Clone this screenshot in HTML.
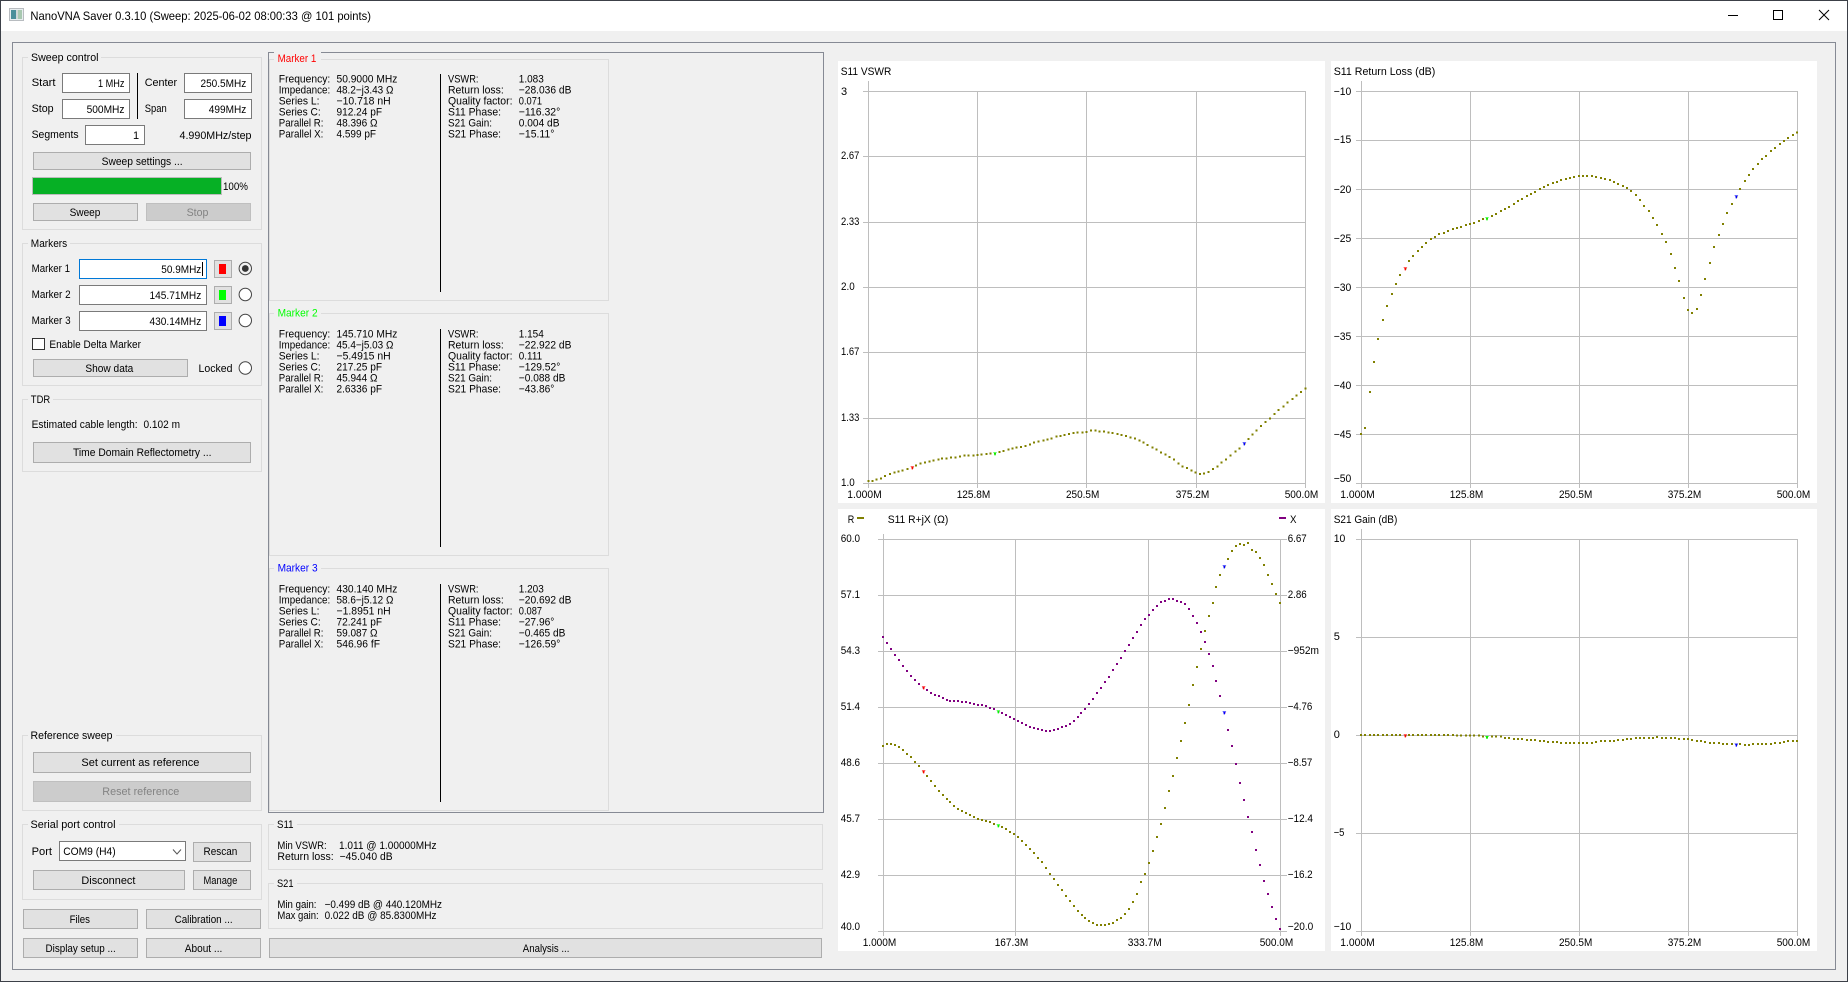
<!DOCTYPE html>
<html><head><meta charset="utf-8"><title>NanoVNA Saver</title>
<style>
html,body{margin:0;padding:0;background:#f0f0f0;overflow:hidden}
svg{display:block}
text{font:11px "Liberation Sans","Noto Sans CJK JP",sans-serif;fill:#000;white-space:pre}
rect,line.c,path.c{shape-rendering:crispEdges}
.g{fill:#f0f0f0;stroke:#dcdcdc}
.f{fill:none;stroke:#868a94}
.b{fill:#e1e1e1;stroke:#adadad}
.d{fill:#ccc;stroke:#bfbfbf}
.i{fill:#fff;stroke:#7a7a7a}
.gr{fill:none;stroke:#bebebe;stroke-width:1;shape-rendering:crispEdges}
.dot{fill:none;stroke-width:6;stroke-linecap:square;shape-rendering:crispEdges}
.dis{fill:#838383}
</style></head><body>
<svg xmlns="http://www.w3.org/2000/svg" width="1848" height="982" viewBox="0 0 1848 982">
<rect width="1848" height="982" fill="#f0f0f0"/>
<rect width="1848" height="31" fill="#fff"/>
<rect width="1848" height="1" fill="#3c4048"/><rect y="981" width="1848" height="1" fill="#3c4048"/><rect width="1" height="982" fill="#3c4048"/><rect x="1847" width="1" height="982" fill="#3c4048"/>
<!-- title bar -->
<rect x="9.5" y="8.5" width="14" height="12" fill="#e8eef0" stroke="#b8bcc0"/><rect x="11" y="10" width="5" height="9" fill="#4a8f9a"/><rect x="16" y="10" width="2" height="9" fill="#d0d8d8"/><rect x="18" y="10" width="4" height="9" fill="#a8c8b0"/>
<text x="30.4" y="20" textLength="340.6" lengthAdjust="spacingAndGlyphs" style="font-size:12px">NanoVNA Saver 0.3.10 (Sweep: 2025-06-02 08:00:33 @ 101 points)</text>
<rect x="1728" y="15" width="10" height="1" fill="#000"/>
<rect x="1773.5" y="10.5" width="9" height="9" fill="none" stroke="#000"/>
<path d="M1819 10L1829 20M1829 10L1819 20" stroke="#000" stroke-width="1" fill="none"/>
<!-- frames -->
<rect class="f" x="12.5" y="42.5" width="1823" height="927"/>
<rect class="f" x="268.5" y="52.5" width="555" height="760"/>

<!-- Sweep control -->
<rect class="g" x="22.5" y="57.5" width="239" height="172"/>
<rect x="28" y="50" width="73" height="12" fill="#f0f0f0"/>
<text x="31" y="61" textLength="67.5" lengthAdjust="spacingAndGlyphs">Sweep control</text>
<text x="31.6" y="86" textLength="24" lengthAdjust="spacingAndGlyphs">Start</text>
<rect class="i" x="62.5" y="73.5" width="67" height="19"/>
<text x="98" y="87" textLength="26.5" lengthAdjust="spacingAndGlyphs">1 MHz</text>
<text x="31.6" y="112" textLength="22" lengthAdjust="spacingAndGlyphs">Stop</text>
<rect class="i" x="62.5" y="99.5" width="67" height="19"/>
<text x="86.6" y="113" textLength="37.9" lengthAdjust="spacingAndGlyphs">500MHz</text>
<rect x="137" y="73" width="1" height="46" fill="#000"/>
<text x="144.7" y="86" textLength="32.4" lengthAdjust="spacingAndGlyphs">Center</text>
<rect class="i" x="184.5" y="73.5" width="67" height="19"/>
<text x="200.5" y="87" textLength="45.8" lengthAdjust="spacingAndGlyphs">250.5MHz</text>
<text x="144.7" y="112" textLength="22" lengthAdjust="spacingAndGlyphs">Span</text>
<rect class="i" x="184.5" y="99.5" width="67" height="19"/>
<text x="208.8" y="113" textLength="37.5" lengthAdjust="spacingAndGlyphs">499MHz</text>
<text x="31.6" y="138" textLength="47" lengthAdjust="spacingAndGlyphs">Segments</text>
<rect class="i" x="85.5" y="125.5" width="59" height="19"/>
<text x="133" y="139">1</text>
<text x="179.5" y="139" textLength="72" lengthAdjust="spacingAndGlyphs">4.990MHz/step</text>
<rect class="b" x="33.5" y="152.5" width="217" height="17"/>
<text x="101.6" y="165" textLength="81" lengthAdjust="spacingAndGlyphs">Sweep settings ...</text>
<rect x="32.5" y="177.5" width="189" height="17" fill="#06b025" stroke="#bcbcbc"/>
<text x="223" y="190" textLength="25" lengthAdjust="spacingAndGlyphs">100%</text>
<rect class="b" x="33.5" y="203.5" width="104" height="17"/>
<text x="69.6" y="216" textLength="30.8" lengthAdjust="spacingAndGlyphs">Sweep</text>
<rect class="d" x="146.5" y="203.5" width="104" height="17"/>
<text class="dis" x="186.6" y="216" textLength="21.8" lengthAdjust="spacingAndGlyphs">Stop</text>

<!-- Markers -->
<rect class="g" x="22.5" y="243.5" width="239" height="142"/>
<rect x="28" y="237" width="42" height="12" fill="#f0f0f0"/>
<text x="30.8" y="247" textLength="36.4" lengthAdjust="spacingAndGlyphs">Markers</text>
<text x="31.6" y="272" textLength="38.4" lengthAdjust="spacingAndGlyphs">Marker 1</text>
<rect x="79.5" y="259.5" width="127" height="19" fill="#fff" stroke="#0078d7"/>
<text x="161.3" y="273" textLength="40" lengthAdjust="spacingAndGlyphs">50.9MHz</text>
<rect x="202" y="262" width="1" height="14" fill="#000"/>
<rect class="b" x="214.5" y="260.5" width="17" height="17"/><rect x="219" y="264" width="7" height="10" fill="#f00"/>
<circle cx="245.3" cy="268.5" r="6.2" fill="#f0f0f0" stroke="#444"/><circle cx="245.3" cy="268.5" r="3.4" fill="#333"/>
<text x="31.6" y="298" textLength="39" lengthAdjust="spacingAndGlyphs">Marker 2</text>
<rect class="i" x="79.5" y="285.5" width="127" height="19"/>
<text x="149.5" y="299" textLength="51.8" lengthAdjust="spacingAndGlyphs">145.71MHz</text>
<rect class="b" x="214.5" y="286.5" width="17" height="17"/><rect x="219" y="290" width="7" height="10" fill="#0f0"/>
<circle cx="245.3" cy="294.5" r="6.2" fill="#fff" stroke="#444"/>
<text x="31.6" y="324" textLength="39" lengthAdjust="spacingAndGlyphs">Marker 3</text>
<rect class="i" x="79.5" y="311.5" width="127" height="19"/>
<text x="149.5" y="325" textLength="51.8" lengthAdjust="spacingAndGlyphs">430.14MHz</text>
<rect class="b" x="214.5" y="312.5" width="17" height="17"/><rect x="219" y="316" width="7" height="10" fill="#00f"/>
<circle cx="245.3" cy="320.5" r="6.2" fill="#fff" stroke="#444"/>
<rect x="32.5" y="338.5" width="12" height="11" fill="#fff" stroke="#333"/>
<text x="49.4" y="348" textLength="91.6" lengthAdjust="spacingAndGlyphs">Enable Delta Marker</text>
<rect class="b" x="33.5" y="359.5" width="154" height="17"/>
<text x="85.4" y="372" textLength="47.9" lengthAdjust="spacingAndGlyphs">Show data</text>
<text x="198.5" y="372" textLength="34" lengthAdjust="spacingAndGlyphs">Locked</text>
<circle cx="245.3" cy="368" r="6.2" fill="#fff" stroke="#444"/>

<!-- TDR -->
<rect class="g" x="22.5" y="399.5" width="239" height="72"/>
<rect x="28" y="393" width="25" height="12" fill="#f0f0f0"/>
<text x="30.8" y="403" textLength="19.4" lengthAdjust="spacingAndGlyphs">TDR</text>
<text x="31.6" y="428" textLength="106" lengthAdjust="spacingAndGlyphs">Estimated cable length:</text>
<text x="143.5" y="428" textLength="36.5" lengthAdjust="spacingAndGlyphs">0.102 m</text>
<rect class="b" x="33.5" y="442.5" width="217" height="20"/>
<text x="73" y="456" textLength="138.5" lengthAdjust="spacingAndGlyphs">Time Domain Reflectometry ...</text>

<!-- Reference sweep -->
<rect class="g" x="22.5" y="735.5" width="239" height="75"/>
<rect x="28" y="729" width="88" height="12" fill="#f0f0f0"/>
<text x="30.5" y="739" textLength="82" lengthAdjust="spacingAndGlyphs">Reference sweep</text>
<rect class="b" x="33.5" y="752.5" width="217" height="20"/>
<text x="81.4" y="766" textLength="118" lengthAdjust="spacingAndGlyphs">Set current as reference</text>
<rect class="d" x="33.5" y="781.5" width="217" height="20"/>
<text class="dis" x="102.3" y="795" textLength="77" lengthAdjust="spacingAndGlyphs">Reset reference</text>

<!-- Serial -->
<rect class="g" x="22.5" y="824.5" width="239" height="75"/>
<rect x="28" y="818" width="91" height="12" fill="#f0f0f0"/>
<text x="30.5" y="828" textLength="85" lengthAdjust="spacingAndGlyphs">Serial port control</text>
<text x="31.6" y="855" textLength="20.4" lengthAdjust="spacingAndGlyphs">Port</text>
<rect class="i" x="59.5" y="841.5" width="126" height="19"/>
<text x="63.2" y="855" textLength="52.5" lengthAdjust="spacingAndGlyphs">COM9 (H4)</text>
<path d="M173 849.5l4 4.5l4-4.5" fill="none" stroke="#555"/>
<rect class="b" x="193.5" y="842.5" width="57" height="19"/>
<text x="203.5" y="855" textLength="33.8" lengthAdjust="spacingAndGlyphs">Rescan</text>
<rect class="b" x="33.5" y="870.5" width="151" height="19"/>
<text x="81.4" y="884" textLength="54" lengthAdjust="spacingAndGlyphs">Disconnect</text>
<rect class="b" x="193.5" y="870.5" width="57" height="19"/>
<text x="203.5" y="884" textLength="33.8" lengthAdjust="spacingAndGlyphs">Manage</text>

<rect class="b" x="23.5" y="909.5" width="114" height="19"/>
<text x="69.6" y="923" textLength="20.4" lengthAdjust="spacingAndGlyphs">Files</text>
<rect class="b" x="146.5" y="909.5" width="114" height="19"/>
<text x="174.6" y="923" textLength="58" lengthAdjust="spacingAndGlyphs">Calibration ...</text>
<rect class="b" x="23.5" y="938.5" width="114" height="19"/>
<text x="45.5" y="952" textLength="70.2" lengthAdjust="spacingAndGlyphs">Display setup ...</text>
<rect class="b" x="146.5" y="938.5" width="114" height="19"/>
<text x="184.8" y="952" textLength="37.5" lengthAdjust="spacingAndGlyphs">About ...</text>
<rect class="b" x="269.5" y="938.5" width="552" height="19"/>
<text x="522.8" y="952" textLength="46.6" lengthAdjust="spacingAndGlyphs">Analysis ...</text>

<!-- S11 / S21 boxes -->
<rect class="g" x="268.5" y="824.5" width="554" height="45"/>
<rect x="274" y="818" width="23" height="12" fill="#f0f0f0"/>
<text x="277" y="828" textLength="16.5" lengthAdjust="spacingAndGlyphs">S11</text>
<text x="277.4" y="849" textLength="49.3" lengthAdjust="spacingAndGlyphs">Min VSWR:</text>
<text x="339" y="849" textLength="97.5" lengthAdjust="spacingAndGlyphs">1.011 @ 1.00000MHz</text>
<text x="277.4" y="860" textLength="56.3" lengthAdjust="spacingAndGlyphs">Return loss:</text>
<text x="339.6" y="860" textLength="53" lengthAdjust="spacingAndGlyphs">−45.040 dB</text>
<rect class="g" x="268.5" y="883.5" width="554" height="45"/>
<rect x="274" y="877" width="23" height="12" fill="#f0f0f0"/>
<text x="277" y="887" textLength="16.5" lengthAdjust="spacingAndGlyphs">S21</text>
<text x="277.4" y="908" textLength="39.1" lengthAdjust="spacingAndGlyphs">Min gain:</text>
<text x="324.6" y="908" textLength="117.4" lengthAdjust="spacingAndGlyphs">−0.499 dB @ 440.120MHz</text>
<text x="277.4" y="919" textLength="41.3" lengthAdjust="spacingAndGlyphs">Max gain:</text>
<text x="324.6" y="919" textLength="111.9" lengthAdjust="spacingAndGlyphs">0.022 dB @ 85.8300MHz</text>

<!-- Marker 1 box -->
<rect class="g" x="269.5" y="59.5" width="339" height="241"/>
<rect x="274" y="52" width="47" height="12" fill="#f0f0f0"/>
<text x="277.6" y="62" textLength="38.7" lengthAdjust="spacingAndGlyphs" style="fill:#f00">Marker 1</text>
<rect x="440" y="74" width="1" height="218" fill="#000"/>
<text x="278.8" y="82.7" textLength="51.4" lengthAdjust="spacingAndGlyphs">Frequency:</text>
<text x="278.8" y="93.7" textLength="51.4" lengthAdjust="spacingAndGlyphs">Impedance:</text>
<text x="278.8" y="104.7" textLength="40.7" lengthAdjust="spacingAndGlyphs">Series L:</text>
<text x="278.8" y="115.7" textLength="41.9" lengthAdjust="spacingAndGlyphs">Series C:</text>
<text x="278.8" y="126.7" textLength="44.6" lengthAdjust="spacingAndGlyphs">Parallel R:</text>
<text x="278.8" y="137.7" textLength="44.6" lengthAdjust="spacingAndGlyphs">Parallel X:</text>
<text x="336.5" y="82.7" textLength="60.9" lengthAdjust="spacingAndGlyphs">50.9000 MHz</text>
<text x="336.5" y="93.7" textLength="56.9" lengthAdjust="spacingAndGlyphs">48.2−j3.43 Ω</text>
<text x="336.5" y="104.7" textLength="54.2" lengthAdjust="spacingAndGlyphs">−10.718 nH</text>
<text x="336.5" y="115.7" textLength="45.5" lengthAdjust="spacingAndGlyphs">912.24 pF</text>
<text x="336.5" y="126.7" textLength="41" lengthAdjust="spacingAndGlyphs">48.396 Ω</text>
<text x="336.5" y="137.7" textLength="39.5" lengthAdjust="spacingAndGlyphs">4.599 pF</text>
<text x="448" y="82.7" textLength="30.5" lengthAdjust="spacingAndGlyphs">VSWR:</text>
<text x="448" y="93.7" textLength="55.8" lengthAdjust="spacingAndGlyphs">Return loss:</text>
<text x="448" y="104.7" textLength="64.5" lengthAdjust="spacingAndGlyphs">Quality factor:</text>
<text x="448" y="115.7" textLength="53" lengthAdjust="spacingAndGlyphs">S11 Phase:</text>
<text x="448" y="126.7" textLength="44" lengthAdjust="spacingAndGlyphs">S21 Gain:</text>
<text x="448" y="137.7" textLength="53" lengthAdjust="spacingAndGlyphs">S21 Phase:</text>
<text x="518.8" y="82.7" textLength="25" lengthAdjust="spacingAndGlyphs">1.083</text>
<text x="518.8" y="93.7" textLength="52.6" lengthAdjust="spacingAndGlyphs">−28.036 dB</text>
<text x="518.8" y="104.7" textLength="23.3" lengthAdjust="spacingAndGlyphs">0.071</text>
<text x="518.8" y="115.7" textLength="41.5" lengthAdjust="spacingAndGlyphs">−116.32°</text>
<text x="518.8" y="126.7" textLength="40.7" lengthAdjust="spacingAndGlyphs">0.004 dB</text>
<text x="518.8" y="137.7" textLength="35.6" lengthAdjust="spacingAndGlyphs">−15.11°</text>

<!-- Marker 2 box -->
<rect class="g" x="269.5" y="313.5" width="339" height="242"/>
<rect x="274" y="307" width="47" height="12" fill="#f0f0f0"/>
<text x="277.6" y="316.7" textLength="40" lengthAdjust="spacingAndGlyphs" style="fill:#0f0">Marker 2</text>
<rect x="440" y="329" width="1" height="218" fill="#000"/>
<text x="278.8" y="337.7" textLength="51.4" lengthAdjust="spacingAndGlyphs">Frequency:</text>
<text x="278.8" y="348.7" textLength="51.4" lengthAdjust="spacingAndGlyphs">Impedance:</text>
<text x="278.8" y="359.7" textLength="40.7" lengthAdjust="spacingAndGlyphs">Series L:</text>
<text x="278.8" y="370.7" textLength="41.9" lengthAdjust="spacingAndGlyphs">Series C:</text>
<text x="278.8" y="381.7" textLength="44.6" lengthAdjust="spacingAndGlyphs">Parallel R:</text>
<text x="278.8" y="392.7" textLength="44.6" lengthAdjust="spacingAndGlyphs">Parallel X:</text>
<text x="336.5" y="337.7" textLength="60.9" lengthAdjust="spacingAndGlyphs">145.710 MHz</text>
<text x="336.5" y="348.7" textLength="56.9" lengthAdjust="spacingAndGlyphs">45.4−j5.03 Ω</text>
<text x="336.5" y="359.7" textLength="54.2" lengthAdjust="spacingAndGlyphs">−5.4915 nH</text>
<text x="336.5" y="370.7" textLength="45.5" lengthAdjust="spacingAndGlyphs">217.25 pF</text>
<text x="336.5" y="381.7" textLength="41" lengthAdjust="spacingAndGlyphs">45.944 Ω</text>
<text x="336.5" y="392.7" textLength="45.5" lengthAdjust="spacingAndGlyphs">2.6336 pF</text>
<text x="448" y="337.7" textLength="30.5" lengthAdjust="spacingAndGlyphs">VSWR:</text>
<text x="448" y="348.7" textLength="55.8" lengthAdjust="spacingAndGlyphs">Return loss:</text>
<text x="448" y="359.7" textLength="64.5" lengthAdjust="spacingAndGlyphs">Quality factor:</text>
<text x="448" y="370.7" textLength="53" lengthAdjust="spacingAndGlyphs">S11 Phase:</text>
<text x="448" y="381.7" textLength="44" lengthAdjust="spacingAndGlyphs">S21 Gain:</text>
<text x="448" y="392.7" textLength="53" lengthAdjust="spacingAndGlyphs">S21 Phase:</text>
<text x="518.8" y="337.7" textLength="25" lengthAdjust="spacingAndGlyphs">1.154</text>
<text x="518.8" y="348.7" textLength="52.6" lengthAdjust="spacingAndGlyphs">−22.922 dB</text>
<text x="518.8" y="359.7" textLength="23.3" lengthAdjust="spacingAndGlyphs">0.111</text>
<text x="518.8" y="370.7" textLength="41.5" lengthAdjust="spacingAndGlyphs">−129.52°</text>
<text x="518.8" y="381.7" textLength="46.6" lengthAdjust="spacingAndGlyphs">−0.088 dB</text>
<text x="518.8" y="392.7" textLength="35.6" lengthAdjust="spacingAndGlyphs">−43.86°</text>

<!-- Marker 3 box -->
<rect class="g" x="269.5" y="568.5" width="339" height="242"/>
<rect x="274" y="562" width="47" height="12" fill="#f0f0f0"/>
<text x="277.6" y="571.7" textLength="40" lengthAdjust="spacingAndGlyphs" style="fill:#00f">Marker 3</text>
<rect x="440" y="584" width="1" height="218" fill="#000"/>
<text x="278.8" y="592.7" textLength="51.4" lengthAdjust="spacingAndGlyphs">Frequency:</text>
<text x="278.8" y="603.7" textLength="51.4" lengthAdjust="spacingAndGlyphs">Impedance:</text>
<text x="278.8" y="614.7" textLength="40.7" lengthAdjust="spacingAndGlyphs">Series L:</text>
<text x="278.8" y="625.7" textLength="41.9" lengthAdjust="spacingAndGlyphs">Series C:</text>
<text x="278.8" y="636.7" textLength="44.6" lengthAdjust="spacingAndGlyphs">Parallel R:</text>
<text x="278.8" y="647.7" textLength="44.6" lengthAdjust="spacingAndGlyphs">Parallel X:</text>
<text x="336.5" y="592.7" textLength="60.9" lengthAdjust="spacingAndGlyphs">430.140 MHz</text>
<text x="336.5" y="603.7" textLength="56.9" lengthAdjust="spacingAndGlyphs">58.6−j5.12 Ω</text>
<text x="336.5" y="614.7" textLength="54.2" lengthAdjust="spacingAndGlyphs">−1.8951 nH</text>
<text x="336.5" y="625.7" textLength="45.5" lengthAdjust="spacingAndGlyphs">72.241 pF</text>
<text x="336.5" y="636.7" textLength="41" lengthAdjust="spacingAndGlyphs">59.087 Ω</text>
<text x="336.5" y="647.7" textLength="43.5" lengthAdjust="spacingAndGlyphs">546.96 fF</text>
<text x="448" y="592.7" textLength="30.5" lengthAdjust="spacingAndGlyphs">VSWR:</text>
<text x="448" y="603.7" textLength="55.8" lengthAdjust="spacingAndGlyphs">Return loss:</text>
<text x="448" y="614.7" textLength="64.5" lengthAdjust="spacingAndGlyphs">Quality factor:</text>
<text x="448" y="625.7" textLength="53" lengthAdjust="spacingAndGlyphs">S11 Phase:</text>
<text x="448" y="636.7" textLength="44" lengthAdjust="spacingAndGlyphs">S21 Gain:</text>
<text x="448" y="647.7" textLength="53" lengthAdjust="spacingAndGlyphs">S21 Phase:</text>
<text x="518.8" y="592.7" textLength="25" lengthAdjust="spacingAndGlyphs">1.203</text>
<text x="518.8" y="603.7" textLength="52.6" lengthAdjust="spacingAndGlyphs">−20.692 dB</text>
<text x="518.8" y="614.7" textLength="23.3" lengthAdjust="spacingAndGlyphs">0.087</text>
<text x="518.8" y="625.7" textLength="35.6" lengthAdjust="spacingAndGlyphs">−27.96°</text>
<text x="518.8" y="636.7" textLength="46.6" lengthAdjust="spacingAndGlyphs">−0.465 dB</text>
<text x="518.8" y="647.7" textLength="41.5" lengthAdjust="spacingAndGlyphs">−126.59°</text>

<!-- Chart 1 VSWR -->
<rect x="838" y="61" width="487" height="442" fill="#fff"/>
<path class="gr" d="M868.5 81V488M977.5 91V488M1086.5 91V488M1196.5 91V488M1305.5 91V488M863 91.5H1306M863 156.5H1306M863 222.5H1306M863 287.5H1306M863 352.5H1306M863 418.5H1306M863 483.5H1306"/>
<text x="840.7" y="75" textLength="50.6" lengthAdjust="spacingAndGlyphs">S11 VSWR</text>
<text x="841" y="95">3</text>
<text x="841" y="159" textLength="18.3" lengthAdjust="spacingAndGlyphs">2.67</text>
<text x="841" y="225" textLength="18.3" lengthAdjust="spacingAndGlyphs">2.33</text>
<text x="841" y="290" textLength="13.7" lengthAdjust="spacingAndGlyphs">2.0</text>
<text x="841" y="355" textLength="18.3" lengthAdjust="spacingAndGlyphs">1.67</text>
<text x="841" y="421" textLength="18.3" lengthAdjust="spacingAndGlyphs">1.33</text>
<text x="841" y="486" textLength="13.7" lengthAdjust="spacingAndGlyphs">1.0</text>
<text x="847.3" y="498" textLength="34.4" lengthAdjust="spacingAndGlyphs">1.000M</text>
<text x="956.7" y="498" textLength="33.6" lengthAdjust="spacingAndGlyphs">125.8M</text>
<text x="1066" y="498" textLength="33.3" lengthAdjust="spacingAndGlyphs">250.5M</text>
<text x="1175.7" y="498" textLength="33.6" lengthAdjust="spacingAndGlyphs">375.2M</text>
<text x="1284.7" y="498" textLength="33.6" lengthAdjust="spacingAndGlyphs">500.0M</text>
<g transform="translate(830,50) scale(.33333)">
<path class="dot" stroke="#808000" d="M115 1293h0M127 1293h0M140 1288h0M153 1285h0M165 1278h0M180 1272h0M193 1268h0M205 1264h0M218 1261h0M232 1257h0M247 1252h0M258 1246h0M272 1240h0M285 1238h0M298 1235h0M311 1232h0M325 1229h0M336 1226h0M350 1225h0M363 1223h0M376 1222h0M390 1220h0M403 1217h0M415 1217h0M430 1216h0M442 1215h0M455 1213h0M469 1212h0M481 1211h0M495 1210h0M508 1206h0M520 1203h0M535 1199h0M548 1196h0M560 1193h0M573 1191h0M587 1188h0M600 1184h0M612 1178h0M625 1175h0M640 1172h0M652 1169h0M665 1165h0M679 1160h0M692 1158h0M704 1155h0M717 1152h0M730 1149h0M743 1148h0M757 1147h0M770 1146h0M783 1142h0M796 1142h0M808 1144h0M822 1145h0M836 1148h0M848 1149h0M862 1152h0M875 1155h0M888 1158h0M902 1162h0M915 1166h0M928 1171h0M940 1178h0M953 1185h0M967 1192h0M980 1199h0M993 1207h0M1006 1213h0M1018 1221h0M1032 1229h0M1045 1241h0M1058 1249h0M1071 1254h0M1084 1261h0M1097 1268h0M1110 1272h0M1122 1270h0M1135 1266h0M1149 1257h0M1162 1250h0M1175 1237h0M1188 1228h0M1202 1217h0M1216 1205h0M1229 1195h0M1243 1180h0M1255 1167h0M1268 1154h0M1280 1141h0M1293 1128h0M1307 1116h0M1320 1105h0M1333 1092h0M1346 1080h0M1360 1070h0M1373 1058h0M1387 1047h0M1400 1037h0M1413 1026h0M1427 1016h0"/>
<path fill="#f00" d="M241 1249h12l-4 4v5h-4v-5z"/><path fill="#0f0" d="M489 1207h12l-4 4v5h-4v-5z"/><path fill="#00f" d="M1237 1177h12l-4 4v5h-4v-5z"/>
</g>

<!-- Chart 2 Return loss -->
<rect x="1331" y="61" width="486" height="442" fill="#fff"/>
<path class="gr" d="M1361.5 81V488M1470.5 91V488M1579.5 91V488M1688.5 91V488M1797.5 91V488M1356 91.5H1798M1356 140.5H1798M1356 189.5H1798M1356 238.5H1798M1356 287.5H1798M1356 336.5H1798M1356 385.5H1798M1356 434.5H1798M1356 483.5H1798"/>
<text x="1333.7" y="75" textLength="101.6" lengthAdjust="spacingAndGlyphs">S11 Return Loss (dB)</text>
<text x="1333.7" y="95" textLength="17.6" lengthAdjust="spacingAndGlyphs">−10</text>
<text x="1333.7" y="143" textLength="17.6" lengthAdjust="spacingAndGlyphs">−15</text>
<text x="1333.7" y="193" textLength="17.6" lengthAdjust="spacingAndGlyphs">−20</text>
<text x="1333.7" y="242" textLength="17.6" lengthAdjust="spacingAndGlyphs">−25</text>
<text x="1333.7" y="291" textLength="17.6" lengthAdjust="spacingAndGlyphs">−30</text>
<text x="1333.7" y="340" textLength="17.6" lengthAdjust="spacingAndGlyphs">−35</text>
<text x="1333.7" y="389" textLength="17.6" lengthAdjust="spacingAndGlyphs">−40</text>
<text x="1333.7" y="438" textLength="17.6" lengthAdjust="spacingAndGlyphs">−45</text>
<text x="1333.7" y="482" textLength="17.6" lengthAdjust="spacingAndGlyphs">−50</text>
<text x="1340.3" y="498" textLength="34.4" lengthAdjust="spacingAndGlyphs">1.000M</text>
<text x="1449.7" y="498" textLength="33.6" lengthAdjust="spacingAndGlyphs">125.8M</text>
<text x="1559" y="498" textLength="33.3" lengthAdjust="spacingAndGlyphs">250.5M</text>
<text x="1667.7" y="498" textLength="33.6" lengthAdjust="spacingAndGlyphs">375.2M</text>
<text x="1776.7" y="498" textLength="33.6" lengthAdjust="spacingAndGlyphs">500.0M</text>
<g transform="translate(1330,50) scale(.33333)">
<path class="dot" stroke="#808000" d="M93 1152h0M105 1134h0M120 1026h0M132 936h0M144 867h0M159 810h0M171 768h0M186 732h0M198 702h0M210 675h0M226 655h0M237 633h0M249 618h0M264 603h0M276 591h0M288 579h0M303 567h0M315 561h0M327 552h0M342 549h0M354 543h0M369 537h0M381 534h0M393 531h0M408 525h0M420 522h0M432 519h0M447 513h0M459 507h0M471 505h0M486 498h0M498 492h0M513 483h0M525 477h0M537 471h0M552 462h0M564 453h0M576 447h0M591 438h0M603 432h0M615 426h0M630 417h0M642 411h0M654 405h0M669 399h0M681 396h0M693 390h0M708 387h0M720 384h0M732 381h0M747 378h0M759 378h0M771 378h0M786 378h0M798 381h0M813 384h0M825 387h0M840 390h0M852 396h0M864 402h0M879 408h0M891 414h0M903 423h0M918 435h0M930 450h0M942 468h0M957 483h0M969 504h0M981 525h0M996 552h0M1008 576h0M1023 612h0M1035 654h0M1047 693h0M1062 744h0M1074 780h0M1086 789h0M1101 777h0M1113 735h0M1125 687h0M1140 639h0M1152 591h0M1167 555h0M1179 522h0M1191 489h0M1206 462h0M1219 439h0M1230 417h0M1245 393h0M1257 375h0M1269 357h0M1284 342h0M1296 327h0M1308 318h0M1323 303h0M1335 294h0M1350 282h0M1362 273h0M1374 264h0M1389 255h0M1401 248h0"/>
<path fill="#f00" d="M220 652h12l-4 4v5h-4v-5z"/><path fill="#0f0" d="M465 502h12l-4 4v5h-4v-5z"/><path fill="#00f" d="M1213 436h12l-4 4v5h-4v-5z"/>
</g>

<!-- Chart 3 R+jX -->
<rect x="838" y="509" width="487" height="442" fill="#fff"/>
<path class="gr" d="M883.5 534V936M1015.5 539V936M1148.5 539V936M1280.5 539V936M878 539.5H1287M878 595.5H1287M878 651.5H1287M878 707.5H1287M878 763.5H1287M878 819.5H1287M878 875.5H1287M878 931.5H1287"/>
<text x="847.7" y="523" textLength="6.5" lengthAdjust="spacingAndGlyphs">R</text>
<rect x="857" y="517" width="7" height="2" fill="#808000"/>
<text x="887.7" y="523" textLength="60.6" lengthAdjust="spacingAndGlyphs">S11 R+jX (Ω)</text>
<rect x="1279" y="517" width="7" height="2" fill="#800080"/>
<text x="1290" y="523" textLength="6.5" lengthAdjust="spacingAndGlyphs">X</text>
<text x="840.7" y="542" textLength="19.3" lengthAdjust="spacingAndGlyphs">60.0</text>
<text x="840.7" y="598" textLength="19.3" lengthAdjust="spacingAndGlyphs">57.1</text>
<text x="840.7" y="654" textLength="19.3" lengthAdjust="spacingAndGlyphs">54.3</text>
<text x="840.7" y="710" textLength="19.3" lengthAdjust="spacingAndGlyphs">51.4</text>
<text x="840.7" y="766" textLength="19.3" lengthAdjust="spacingAndGlyphs">48.6</text>
<text x="840.7" y="822" textLength="19.3" lengthAdjust="spacingAndGlyphs">45.7</text>
<text x="840.7" y="878" textLength="19.3" lengthAdjust="spacingAndGlyphs">42.9</text>
<text x="840.7" y="930" textLength="19.3" lengthAdjust="spacingAndGlyphs">40.0</text>
<text x="1287.7" y="542" textLength="19" lengthAdjust="spacingAndGlyphs">6.67</text>
<text x="1287.7" y="598" textLength="19" lengthAdjust="spacingAndGlyphs">2.86</text>
<text x="1287.7" y="654" textLength="31.3" lengthAdjust="spacingAndGlyphs">−952m</text>
<text x="1287.7" y="710" textLength="24.6" lengthAdjust="spacingAndGlyphs">−4.76</text>
<text x="1287.7" y="766" textLength="24.6" lengthAdjust="spacingAndGlyphs">−8.57</text>
<text x="1287.7" y="822" textLength="25.3" lengthAdjust="spacingAndGlyphs">−12.4</text>
<text x="1287.7" y="878" textLength="25" lengthAdjust="spacingAndGlyphs">−16.2</text>
<text x="1287.7" y="930" textLength="25.6" lengthAdjust="spacingAndGlyphs">−20.0</text>
<text x="862.7" y="946" textLength="33.6" lengthAdjust="spacingAndGlyphs">1.000M</text>
<text x="994.7" y="946" textLength="33.6" lengthAdjust="spacingAndGlyphs">167.3M</text>
<text x="1127.7" y="946" textLength="34" lengthAdjust="spacingAndGlyphs">333.7M</text>
<text x="1259.7" y="946" textLength="33.6" lengthAdjust="spacingAndGlyphs">500.0M</text>
<g transform="translate(830,505) scale(.33333)">
<path class="dot" stroke="#808000" d="M159 723h0M171 717h0M183 717h0M195 720h0M207 726h0M219 735h0M231 747h0M243 756h0M255 771h0M267 783h0M281 799h0M291 813h0M303 828h0M315 843h0M327 858h0M339 870h0M351 882h0M360 891h0M372 903h0M384 912h0M396 918h0M408 924h0M420 930h0M432 936h0M444 942h0M456 945h0M468 948h0M480 951h0M492 957h0M505 961h0M516 966h0M528 972h0M540 981h0M552 987h0M564 996h0M576 1008h0M588 1020h0M600 1032h0M612 1044h0M624 1059h0M636 1071h0M648 1089h0M660 1107h0M672 1122h0M684 1140h0M696 1155h0M708 1173h0M720 1188h0M732 1203h0M744 1218h0M756 1230h0M765 1239h0M777 1248h0M789 1254h0M801 1260h0M813 1260h0M825 1260h0M837 1257h0M849 1254h0M861 1245h0M873 1239h0M885 1227h0M897 1212h0M909 1191h0M921 1167h0M933 1131h0M945 1107h0M957 1074h0M969 1038h0M981 996h0M993 957h0M1005 909h0M1017 858h0M1029 813h0M1041 759h0M1053 708h0M1065 654h0M1077 600h0M1089 540h0M1101 486h0M1113 432h0M1125 378h0M1137 333h0M1149 294h0M1158 246h0M1170 210h0M1183 184h0M1194 162h0M1206 138h0M1218 123h0M1230 117h0M1242 120h0M1254 114h0M1266 135h0M1278 141h0M1290 159h0M1302 180h0M1314 210h0M1326 237h0M1338 267h0M1350 294h0"/>
<path class="dot" stroke="#800080" d="M159 396h0M171 414h0M183 432h0M195 450h0M207 465h0M219 483h0M231 498h0M243 513h0M255 525h0M267 537h0M281 547h0M291 555h0M303 564h0M315 570h0M327 573h0M339 579h0M351 585h0M360 588h0M372 588h0M384 588h0M396 591h0M408 591h0M420 594h0M432 597h0M444 600h0M456 600h0M468 603h0M480 609h0M492 612h0M505 619h0M516 624h0M528 630h0M540 636h0M552 642h0M564 648h0M576 654h0M588 660h0M600 666h0M612 669h0M624 672h0M636 675h0M648 678h0M660 678h0M672 675h0M684 672h0M696 666h0M708 663h0M720 657h0M732 648h0M744 636h0M753 624h0M765 612h0M777 597h0M789 582h0M801 564h0M813 549h0M825 531h0M837 516h0M849 495h0M861 477h0M873 459h0M885 438h0M897 420h0M909 399h0M921 381h0M933 360h0M945 342h0M957 330h0M969 315h0M981 303h0M993 291h0M1005 288h0M1017 282h0M1029 282h0M1041 288h0M1053 291h0M1065 297h0M1077 312h0M1089 333h0M1101 354h0M1113 381h0M1125 411h0M1137 447h0M1149 483h0M1158 528h0M1170 573h0M1183 622h0M1194 675h0M1206 723h0M1218 777h0M1230 834h0M1242 885h0M1254 936h0M1266 981h0M1278 1035h0M1290 1080h0M1302 1128h0M1314 1167h0M1326 1206h0M1338 1242h0M1350 1272h0"/>
<path fill="#f00" d="M275 544h12l-4 4v5h-4v-5zM275 796h12l-4 4v5h-4v-5z"/><path fill="#0f0" d="M499 616h12l-4 4v5h-4v-5zM499 958h12l-4 4v5h-4v-5z"/><path fill="#00f" d="M1177 181h12l-4 4v5h-4v-5zM1177 619h12l-4 4v5h-4v-5z"/>
</g>

<!-- Chart 4 S21 gain -->
<rect x="1331" y="509" width="486" height="442" fill="#fff"/>
<path class="gr" d="M1361.5 529V936M1470.5 539V936M1579.5 539V936M1688.5 539V936M1797.5 539V936M1356 539.5H1798M1356 637.5H1798M1356 735.5H1798M1356 833.5H1798M1356 931.5H1798"/>
<text x="1333.7" y="523" textLength="63.6" lengthAdjust="spacingAndGlyphs">S21 Gain (dB)</text>
<text x="1333.7" y="542" textLength="11.6" lengthAdjust="spacingAndGlyphs">10</text>
<text x="1333.7" y="640">5</text>
<text x="1333.7" y="738">0</text>
<text x="1333.7" y="836" textLength="10.7" lengthAdjust="spacingAndGlyphs">−5</text>
<text x="1333.7" y="930" textLength="17.6" lengthAdjust="spacingAndGlyphs">−10</text>
<text x="1340.3" y="946" textLength="34.4" lengthAdjust="spacingAndGlyphs">1.000M</text>
<text x="1449.7" y="946" textLength="33.6" lengthAdjust="spacingAndGlyphs">125.8M</text>
<text x="1559" y="946" textLength="33.3" lengthAdjust="spacingAndGlyphs">250.5M</text>
<text x="1667.7" y="946" textLength="33.6" lengthAdjust="spacingAndGlyphs">375.2M</text>
<text x="1776.7" y="946" textLength="33.6" lengthAdjust="spacingAndGlyphs">500.0M</text>
<g transform="translate(1330,505) scale(.33333)">
<path class="dot" stroke="#808000" d="M93 690h0M105 690h0M120 690h0M132 690h0M144 690h0M159 690h0M171 690h0M186 690h0M198 690h0M210 690h0M226 691h0M237 690h0M249 690h0M264 690h0M276 690h0M288 690h0M303 690h0M315 690h0M327 690h0M342 690h0M354 690h0M369 690h0M381 692h0M393 692h0M408 692h0M420 692h0M432 692h0M447 692h0M459 695h0M471 696h0M486 695h0M498 695h0M513 695h0M525 699h0M537 699h0M552 702h0M564 702h0M576 702h0M591 705h0M603 705h0M615 705h0M630 708h0M642 708h0M654 711h0M669 711h0M681 711h0M693 714h0M708 714h0M720 714h0M732 714h0M747 714h0M759 714h0M771 714h0M786 714h0M798 711h0M813 708h0M825 708h0M840 708h0M852 708h0M864 705h0M879 705h0M891 702h0M903 702h0M918 699h0M930 699h0M942 699h0M957 699h0M969 699h0M981 696h0M996 699h0M1008 699h0M1023 699h0M1035 699h0M1047 702h0M1062 702h0M1074 702h0M1086 705h0M1101 708h0M1113 708h0M1125 711h0M1140 714h0M1152 714h0M1167 714h0M1179 717h0M1191 717h0M1206 717h0M1219 719h0M1230 717h0M1245 720h0M1257 720h0M1269 717h0M1284 717h0M1296 717h0M1308 717h0M1323 717h0M1335 714h0M1350 714h0M1362 711h0M1374 708h0M1389 708h0M1401 708h0"/>
<path fill="#f00" d="M220 688h12l-4 4v5h-4v-5z"/><path fill="#0f0" d="M465 693h12l-4 4v5h-4v-5z"/><path fill="#00f" d="M1213 716h12l-4 4v5h-4v-5z"/>
</g>
</svg>
</body></html>
